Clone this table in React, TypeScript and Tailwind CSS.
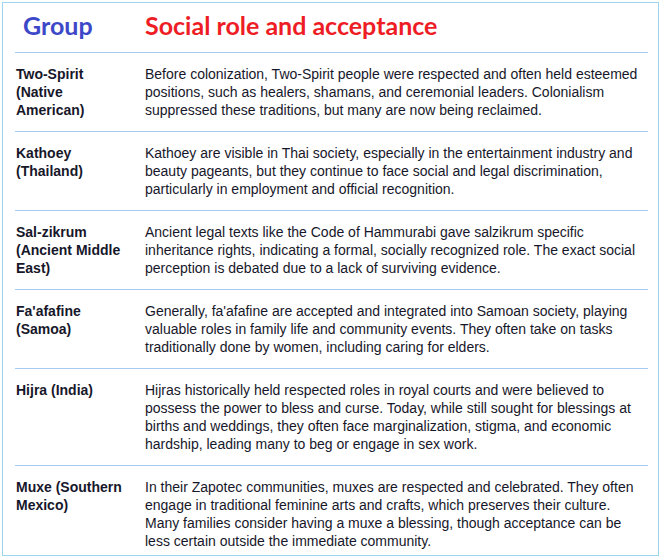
import React from "react";

const rows: { g: string; d: string }[] = [
  {
    g: "Two-Spirit (Native American)",
    d: "Before colonization, Two-Spirit people were respected and often held esteemed positions, such as healers, shamans, and ceremonial leaders. Colonialism suppressed these traditions, but many are now being reclaimed.",
  },
  {
    g: "Kathoey (Thailand)",
    d: "Kathoey are visible in Thai society, especially in the entertainment industry and beauty pageants, but they continue to face social and legal discrimination, particularly in employment and official recognition.",
  },
  {
    g: "Sal-zikrum (Ancient Middle East)",
    d: "Ancient legal texts like the Code of Hammurabi gave salzikrum specific inheritance rights, indicating a formal, socially recognized role. The exact social perception is debated due to a lack of surviving evidence.",
  },
  {
    g: "Fa'afafine (Samoa)",
    d: "Generally, fa'afafine are accepted and integrated into Samoan society, playing valuable roles in family life and community events. They often take on tasks traditionally done by women, including caring for elders.",
  },
  {
    g: "Hijra (India)",
    d: "Hijras historically held respected roles in royal courts and were believed to possess the power to bless and curse. Today, while still sought for blessings at births and weddings, they often face marginalization, stigma, and economic hardship, leading many to beg or engage in sex work.",
  },
  {
    g: "Muxe (Southern Mexico)",
    d: "In their Zapotec communities, muxes are respected and celebrated. They often engage in traditional feminine arts and crafts, which preserves their culture. Many families consider having a muxe a blessing, though acceptance can be less certain outside the immediate community.",
  },
];

export default function App() {
  return (
    <div className="w-[661px] h-[558px] bg-white pt-[2px] pl-[2px]">
      <div className="w-[657px] h-[554px] border border-[#9dd5ee] overflow-hidden pl-[12px] pr-[10px]">
        <div className="flex h-[50px] items-center border-b border-[#a6cbf3] font-['Lato',sans-serif] font-bold text-[25px] leading-none">
          <div className="w-[130px] pl-[8px] text-[#3d48c8] pb-[5px]">Group</div>
          <div className="text-[#ee1d25] pb-[5px]">Social role and acceptance</div>
        </div>
        {rows.map((r) => (
          <div
            key={r.g}
            className="flex border-b border-[#a6cbf3] py-[12px] font-['Liberation_Sans',Arial,sans-serif] text-[14px] leading-[18px] text-[#17172a]"
          >
            <div className="w-[130px] shrink-0 pl-[1px] pr-[22px] font-bold">{r.g}</div>
            <div className="flex-1 pr-[4px]">{r.d}</div>
          </div>
        ))}
      </div>
    </div>
  );
}
